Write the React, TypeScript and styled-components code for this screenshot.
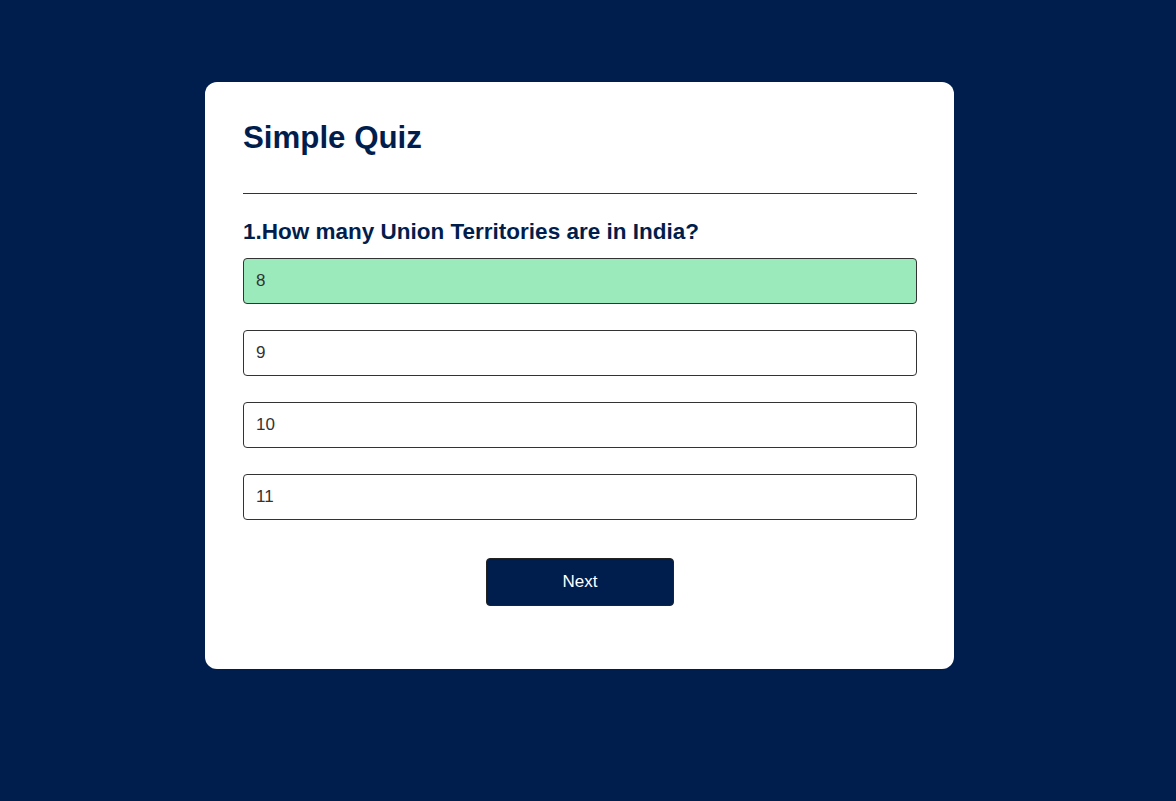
import React, { useState } from "react";
import styled, { createGlobalStyle } from "styled-components";

const Global = createGlobalStyle`
  * { box-sizing: border-box; }
  html, body { margin: 0; padding: 0; }
  body {
    background: #001e4d;
    font-family: "Liberation Sans", Arial, sans-serif;
    min-height: 801px;
  }
`;

const Card = styled.div`
  background: #fff;
  width: 749px;
  margin: 82px 0 0 205px;
  border-radius: 12px;
  padding: 38px 37px 63px 38px;
`;

const Title = styled.h1`
  margin: 0;
  font-size: 31.25px;
  font-weight: 700;
  color: #001e4d;
  line-height: 35px;
  padding-bottom: 38px;
  border-bottom: 1px solid #333;
`;

const Quiz = styled.div`
  padding-top: 25px;
`;

const Question = styled.h2`
  margin: 0 0 14px;
  font-size: 22.5px;
  line-height: 25px;
  font-weight: 700;
  color: #001e4d;
`;

const Answers = styled.div`
  display: flex;
  flex-direction: column;
  gap: 26px;
`;

const Option = styled.button<{ $correct?: boolean }>`
  display: block;
  width: 100%;
  height: 46px;
  text-align: left;
  padding: 0 12px;
  font-family: "Liberation Sans", Arial, sans-serif;
  font-size: 17px;
  color: #333;
  background: ${(p) => (p.$correct ? "#9aeabc" : "#fff")};
  border: 1px solid #333;
  border-radius: 4px;
  cursor: pointer;
`;

const NextButton = styled.button`
  display: block;
  margin: 38px auto 0;
  width: 188px;
  height: 48px;
  background: #001e4d;
  color: #fff;
  font-family: "Liberation Sans", Arial, sans-serif;
  font-size: 17px;
  border: 1px solid #222;
  border-radius: 4px;
  cursor: pointer;
`;

const options = ["8", "9", "10", "11"];

export default function App() {
  const [selected] = useState(0);
  return (
    <>
      <Global />
      <Card>
        <Title>Simple Quiz</Title>
        <Quiz>
          <Question>1.How many Union Territories are in India?</Question>
          <Answers>
            {options.map((o, i) => (
              <Option key={o} $correct={i === selected}>
                {o}
              </Option>
            ))}
          </Answers>
          <NextButton>Next</NextButton>
        </Quiz>
      </Card>
    </>
  );
}
